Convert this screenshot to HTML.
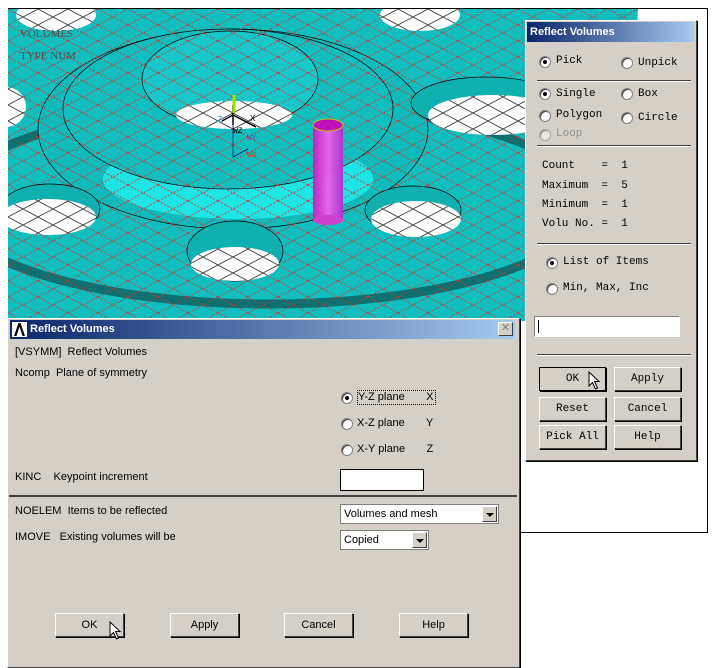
<!DOCTYPE html>
<html><head><meta charset="utf-8"><style>
*{margin:0;padding:0;box-sizing:border-box}
body{width:720px;height:668px;background:#fff;position:relative;overflow:hidden;font-family:"Liberation Sans",sans-serif}
.abs{position:absolute}
.panel{background:#d4d0c8;border:1px solid #fff;border-right-color:#404040;border-bottom-color:#404040;box-shadow:1px 1px 0 #000}
.sep{position:absolute;height:2px;background:#404040;border-bottom:1px solid #fff}
.rad{position:absolute;width:12px;height:12px;border-radius:50%;background:#fff;border:1px solid #808080;box-shadow:inset 1px 1px 0 #404040}
.rad.on::after{content:"";position:absolute;left:3px;top:3px;width:4px;height:4px;border-radius:50%;background:#000}
.btn{position:absolute;background:#d4d0c8;border:1px solid #fff;border-right-color:#404040;border-bottom-color:#404040;box-shadow:1px 1px 0 #000;text-align:center}
.t{position:absolute;font-size:11px;color:#000;white-space:nowrap}
.mono{font-family:"Liberation Mono",monospace;font-size:11px;color:#000;white-space:pre}
</style></head><body>
<div class="abs" style="left:8px;top:8px;width:700px;height:525px;border-top:1px solid #000;border-right:1px solid #000;border-bottom:1px solid #000"></div>
<svg class="abs" style="left:8px;top:9px" width="640" height="312" viewBox="0 0 640 312">
<defs>
<pattern id="g" width="30" height="16" patternUnits="userSpaceOnUse">
<path d="M0 0L30 16M30 0L0 16" stroke="#d43030" stroke-width="0.8" stroke-dasharray="2 1.5" fill="none"/>
</pattern>
<pattern id="gw" width="30" height="16" patternUnits="userSpaceOnUse">
<path d="M0 0L30 16M30 0L0 16" stroke="#333" stroke-width="0.8" fill="none"/>
</pattern>
<linearGradient id="cy" x1="0" x2="1"><stop offset="0" stop-color="#c020c0"/><stop offset="0.5" stop-color="#f060f0"/><stop offset="1" stop-color="#b030d0"/></linearGradient>
<clipPath id="cl"><path d="M0 0H630L612 312H0Z"/></clipPath>
</defs>
<g clip-path="url(#cl)">
<rect width="640" height="312" fill="#10bebe"/>
<ellipse cx="260" cy="195" rx="320" ry="100" fill="none" stroke="#0a7070" stroke-width="9"/>
<ellipse cx="225" cy="120" rx="195" ry="100" fill="#0fbaba" stroke="#000" stroke-width="0.7"/>
<ellipse cx="230" cy="170" rx="135" ry="40" fill="#1ee4e4"/>
<ellipse cx="220" cy="100" rx="165" ry="80" fill="#10bebe" stroke="#000" stroke-width="0.7"/>
<ellipse cx="222" cy="70" rx="88" ry="48" fill="#18c8c8" stroke="#000" stroke-width="0.7"/>
<rect width="640" height="312" fill="url(#g)"/>
<g fill="#fff">
<ellipse cx="226" cy="106" rx="58" ry="14"/>
<ellipse cx="48" cy="6" rx="40" ry="16"/>
<ellipse cx="412" cy="6" rx="40" ry="16"/>
<ellipse cx="-2" cy="98" rx="20" ry="20"/>
</g>
<ellipse cx="478" cy="94" rx="75" ry="26" fill="#10b0b0" stroke="#000" stroke-width="0.7"/>
<ellipse cx="485" cy="106" rx="65" ry="20" fill="#fff"/>
<ellipse cx="42" cy="200" rx="50" ry="25" fill="#10b0b0" stroke="#000" stroke-width="0.7"/>
<ellipse cx="40" cy="208" rx="48" ry="18" fill="#fff"/>
<ellipse cx="405" cy="201" rx="48" ry="24" fill="#10b0b0" stroke="#000" stroke-width="0.7"/>
<ellipse cx="408" cy="210" rx="45" ry="18" fill="#fff"/>
<ellipse cx="227" cy="242" rx="48" ry="30" fill="#10b0b0" stroke="#000" stroke-width="0.7"/>
<ellipse cx="227" cy="255" rx="44" ry="17" fill="#fff"/>
<g fill="url(#gw)">
<ellipse cx="226" cy="106" rx="58" ry="14"/>
<ellipse cx="48" cy="6" rx="40" ry="16"/>
<ellipse cx="412" cy="6" rx="40" ry="16"/>
<ellipse cx="-2" cy="98" rx="20" ry="20"/>
<ellipse cx="485" cy="106" rx="65" ry="20"/>
<ellipse cx="40" cy="208" rx="48" ry="18"/>
<ellipse cx="408" cy="210" rx="45" ry="18"/>
<ellipse cx="227" cy="255" rx="44" ry="17"/>
</g>
<rect x="305" y="116" width="30" height="95" fill="url(#cy)" opacity="0.95"/>
<ellipse cx="320" cy="116" rx="15" ry="6" fill="#c010c0" stroke="#c0c000"/>
<ellipse cx="320" cy="211" rx="15" ry="5" fill="#d040d0"/>
<path d="M225 96V116M225 106L248 118M225 106L214 112" stroke="#000" stroke-width="1.5"/>
<path d="M226 86V104" stroke="#a0e000" stroke-width="3"/>
<path d="M225 114V148M225 148L240 140" stroke="#002080" stroke-width="0.8"/>
<text x="12" y="28" font-family="Liberation Serif" font-size="11" fill="#505050">VOLUMES</text>
<text x="12" y="50" font-family="Liberation Serif" font-size="11" fill="#505050">TYPE NUM</text>
<text x="242" y="112" font-family="Liberation Mono" font-size="9" fill="#000">X</text>
<text x="209" y="113" font-family="Liberation Mono" font-size="9" fill="#30a0ff">Z</text>
<text x="225" y="124" font-family="Liberation Mono" font-size="8" fill="#000">WZ</text>
<text x="239" y="131" font-family="Liberation Mono" font-size="8" fill="#8040c0">WY</text>
<text x="239" y="148" font-family="Liberation Mono" font-size="8" fill="#d04020">WX</text>
</g>
</svg>
<div class="abs panel" style="left:525px;top:20px;width:172px;height:441px">
<div class="abs" style="left:1px;top:1px;width:167px;height:20px;background:linear-gradient(90deg,#0a246a,#a6caf0);color:#fff;font-weight:bold;font-size:11px;line-height:20px;padding-left:3px">Reflect Volumes</div>
<div class="rad on" style="left:13px;top:35px"></div><div class="t mono" style="left:30px;top:34px">Pick</div>
<div class="rad" style="left:95px;top:36px"></div><div class="t mono" style="left:112px;top:36px">Unpick</div>
<div class="sep" style="left:11px;top:59px;width:154px"></div>
<div class="rad on" style="left:13px;top:67px"></div><div class="t mono" style="left:30px;top:67px">Single</div>
<div class="rad" style="left:95px;top:67px"></div><div class="t mono" style="left:112px;top:67px">Box</div>
<div class="rad" style="left:13px;top:89px"></div><div class="t mono" style="left:30px;top:88px">Polygon</div>
<div class="rad" style="left:95px;top:91px"></div><div class="t mono" style="left:112px;top:91px">Circle</div>
<div class="rad" style="left:13px;top:108px;opacity:.5"></div><div class="t mono" style="left:30px;top:107px;color:#909090">Loop</div>
<div class="sep" style="left:11px;top:124px;width:154px"></div>
<div class="t mono" style="left:16px;top:139px">Count    =  1</div>
<div class="t mono" style="left:16px;top:159px">Maximum  =  5</div>
<div class="t mono" style="left:16px;top:178px">Minimum  =  1</div>
<div class="t mono" style="left:16px;top:197px">Volu No. =  1</div>
<div class="sep" style="left:11px;top:222px;width:154px"></div>
<div class="rad on" style="left:20px;top:236px"></div><div class="t mono" style="left:37px;top:235px">List of Items</div>
<div class="rad" style="left:20px;top:262px"></div><div class="t mono" style="left:37px;top:261px">Min, Max, Inc</div>
<div class="abs" style="left:8px;top:295px;width:146px;height:21px;background:#fff;border:1px solid #808080;border-bottom-color:#fff;border-right-color:#fff"><div style="position:absolute;left:3px;top:3px;width:1px;height:13px;background:#000"></div></div>
<div class="sep" style="left:11px;top:333px;width:154px"></div>
<div class="btn mono" style="left:13px;top:346px;width:67px;height:24px;line-height:22px;border:1px solid #000">OK</div>
<div class="btn mono" style="left:88px;top:346px;width:67px;height:24px;line-height:22px">Apply</div>
<div class="btn mono" style="left:13px;top:376px;width:67px;height:24px;line-height:22px">Reset</div>
<div class="btn mono" style="left:88px;top:376px;width:67px;height:24px;line-height:22px">Cancel</div>
<div class="btn mono" style="left:13px;top:404px;width:67px;height:24px;line-height:22px">Pick All</div>
<div class="btn mono" style="left:88px;top:404px;width:67px;height:24px;line-height:22px">Help</div>
<svg class="abs" style="left:62px;top:350px" width="14" height="20"><path d="M1 1V15L4.5 11.5L7.5 18L9.5 17L6.5 10.5H11Z" fill="#fff" stroke="#000"/></svg>
</div>
<div class="abs panel" style="left:7px;top:318px;width:513px;height:350px">
<div class="abs" style="left:2px;top:1px;width:505px;height:19px;background:linear-gradient(90deg,#0a246a,#a6caf0);color:#fff;font-weight:bold;font-size:11px;line-height:19px;padding-left:20px">Reflect Volumes</div>
<svg class="abs" style="left:4px;top:3px" width="15" height="15"><rect width="15" height="15" fill="#fff"/><path d="M2 14L6.5 1H8.5L13 14H10.5L7.5 4.5L4.5 14Z" fill="#000"/></svg>
<div class="abs" style="left:490px;top:3px;width:15px;height:14px;background:#d4d0c8;border:1px solid #fff;border-right-color:#404040;border-bottom-color:#404040;font-size:11px;line-height:11px;text-align:center;color:#808080">✕</div>
<div class="t" style="left:7px;top:27px">[VSYMM]&nbsp; Reflect Volumes</div>
<div class="t" style="left:7px;top:48px">Ncomp&nbsp; Plane of symmetry</div>
<div class="rad on" style="left:333px;top:73px"></div><div class="t" style="left:349px;top:71px;border:1px dotted #000;padding:0 2px 1px 0">Y-Z plane&nbsp;&nbsp;&nbsp;&nbsp;&nbsp;&nbsp; X</div>
<div class="rad" style="left:333px;top:99px"></div><div class="t" style="left:349px;top:98px">X-Z plane&nbsp;&nbsp;&nbsp;&nbsp;&nbsp;&nbsp; Y</div>
<div class="rad" style="left:333px;top:125px"></div><div class="t" style="left:349px;top:124px">X-Y plane&nbsp;&nbsp;&nbsp;&nbsp;&nbsp;&nbsp; Z</div>
<div class="t" style="left:7px;top:152px">KINC&nbsp;&nbsp;&nbsp; Keypoint increment</div>
<div class="abs" style="left:332px;top:150px;width:84px;height:22px;background:#fff;border:1px solid #000"></div>
<div class="abs" style="left:1px;top:176px;width:508px;height:2px;background:#404040"></div>
<div class="t" style="left:7px;top:186px">NOELEM&nbsp; Items to be reflected</div>
<div class="abs" style="left:332px;top:185px;width:159px;height:20px;background:#fff;border:1px solid #808080;font-size:11px;line-height:18px;padding-left:3px">Volumes and mesh
<div class="abs" style="right:1px;top:1px;width:15px;height:16px;background:#d4d0c8;border:1px solid #fff;border-right-color:#404040;border-bottom-color:#404040"><div style="position:absolute;left:3px;top:6px;border:4px solid transparent;border-top:4px solid #000;border-bottom:0"></div></div></div>
<div class="t" style="left:7px;top:212px">IMOVE&nbsp;&nbsp; Existing volumes will be</div>
<div class="abs" style="left:332px;top:211px;width:89px;height:20px;background:#fff;border:1px solid #808080;font-size:11px;line-height:18px;padding-left:3px">Copied
<div class="abs" style="right:1px;top:1px;width:15px;height:16px;background:#d4d0c8;border:1px solid #fff;border-right-color:#404040;border-bottom-color:#404040"><div style="position:absolute;left:3px;top:6px;border:4px solid transparent;border-top:4px solid #000;border-bottom:0"></div></div></div>
<div class="btn" style="left:47px;top:294px;width:69px;height:24px;line-height:22px;font-size:11px">OK</div>
<div class="btn" style="left:162px;top:294px;width:69px;height:24px;line-height:22px;font-size:11px">Apply</div>
<div class="btn" style="left:276px;top:294px;width:69px;height:24px;line-height:22px;font-size:11px">Cancel</div>
<div class="btn" style="left:391px;top:294px;width:69px;height:24px;line-height:22px;font-size:11px">Help</div>
<svg class="abs" style="left:101px;top:302px" width="14" height="20"><path d="M1 1V15L4.5 11.5L7.5 18L9.5 17L6.5 10.5H11Z" fill="#fff" stroke="#000"/></svg>
</div>
</body></html>
